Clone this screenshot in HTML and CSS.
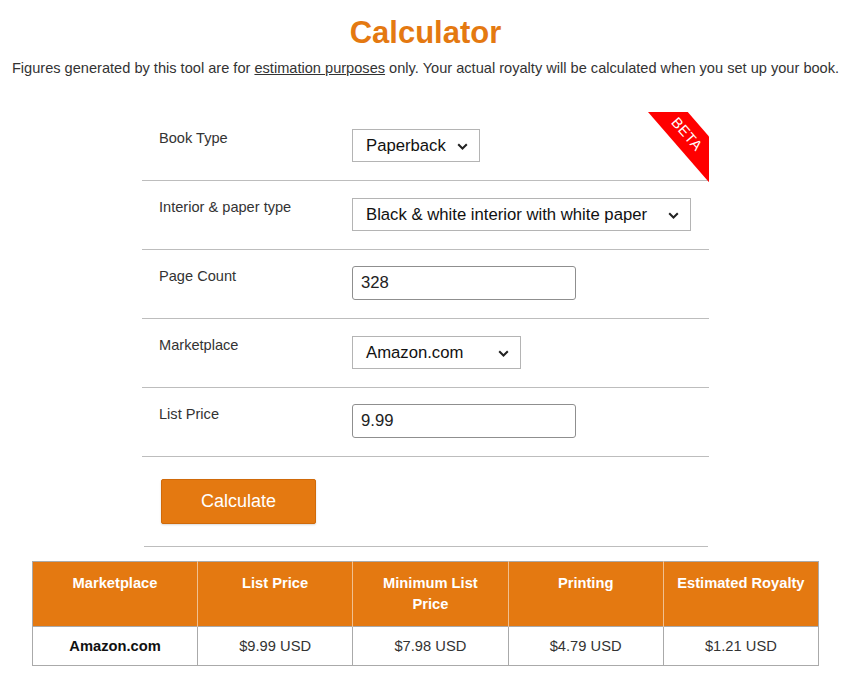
FILE: index.html
```html
<!DOCTYPE html>
<html>
<head>
<meta charset="utf-8">
<link rel="stylesheet" href="styles.css">
</head>
<body>
<div class="page">
  <h1 class="title">Calculator</h1>
  <p class="subtitle">Figures generated by this tool are for <a class="link" href="#">estimation purposes</a> only. Your actual royalty will be calculated when you set up your book.</p>

  <div class="form">
    <div class="ribbon">BETA</div>
    <div class="row">
      <div class="label">Book Type</div>
      <div class="select w-sm"><span>Paperback</span><svg class="chev" width="11" height="7" viewBox="0 0 11 7"><path d="M1.2 1.2 L5.5 5.5 L9.8 1.2" fill="none" stroke="#222" stroke-width="2"/></svg></div>
    </div>
    <div class="row">
      <div class="label">Interior &amp; paper type</div>
      <div class="select w-lg"><span>Black &amp; white interior with white paper</span><svg class="chev" width="11" height="7" viewBox="0 0 11 7"><path d="M1.2 1.2 L5.5 5.5 L9.8 1.2" fill="none" stroke="#222" stroke-width="2"/></svg></div>
    </div>
    <div class="row">
      <div class="label">Page Count</div>
      <div class="input">328</div>
    </div>
    <div class="row">
      <div class="label">Marketplace</div>
      <div class="select w-md"><span>Amazon.com</span><svg class="chev" width="11" height="7" viewBox="0 0 11 7"><path d="M1.2 1.2 L5.5 5.5 L9.8 1.2" fill="none" stroke="#222" stroke-width="2"/></svg></div>
    </div>
    <div class="row">
      <div class="label">List Price</div>
      <div class="input">9.99</div>
    </div>
    <div class="button-row">
      <button class="btn">Calculate</button>
    </div>
  </div>

  <table class="results">
    <thead>
      <tr>
        <th class="c1">Marketplace</th>
        <th>List Price</th>
        <th>Minimum List Price</th>
        <th>Printing</th>
        <th>Estimated Royalty</th>
      </tr>
    </thead>
    <tbody>
      <tr>
        <td class="strong">Amazon.com</td>
        <td>$9.99 USD</td>
        <td>$7.98 USD</td>
        <td>$4.79 USD</td>
        <td>$1.21 USD</td>
      </tr>
    </tbody>
  </table>
</div>
</body>
</html>
```

FILE: styles.css
```css
* { box-sizing: border-box; }
html, body { margin: 0; padding: 0; background: #fff; }
body {
  font-family: "Liberation Sans", Arial, sans-serif;
  color: #333;
}
.page {
  display: flex;
  flex-direction: column;
  align-items: center;
  padding-top: 15px;
  padding-right: 2px;
}
.title {
  margin: 0;
  font-size: 31px;
  line-height: 36px;
  font-weight: bold;
  color: #e47911;
}
.subtitle {
  margin: 7px 0 0;
  font-size: 14.6px;
  line-height: 20px;
  color: #333;
  white-space: nowrap;
}
.link { color: #333; text-decoration: underline; }

.form {
  position: relative;
  overflow: hidden;
  width: 567px;
  margin-top: 34px;
}
.ribbon {
  position: absolute;
  top: 7px;
  right: -38px;
  width: 120px;
  height: 30px;
  line-height: 30px;
  background: #ff0000;
  color: #fff;
  font-size: 14.5px;
  letter-spacing: 0.5px;
  text-align: center;
  transform: rotate(49deg);
}
.row {
  display: flex;
  align-items: flex-start;
  padding: 17px 0 18px 17px;
  border-bottom: 1px solid #bdbdbd;
}
.label {
  width: 193px;
  flex: none;
  font-size: 14.6px;
  line-height: 18px;
  color: #333;
}
.select {
  display: flex;
  align-items: center;
  justify-content: space-between;
  height: 33px;
  padding: 0 11px 0 13px;
  border: 1px solid #b4b4b4;
  background: #fff;
  font-size: 16.7px;
  color: #111;
}
.w-sm { width: 128px; }
.w-md { width: 169px; }
.w-lg { width: 339px; }
.chev { flex: none; margin-top: 1px; }
.input {
  width: 224px;
  height: 34px;
  margin-top: -1px;
  padding: 0 8px;
  border: 1px solid #8f8f8f;
  border-radius: 3px;
  font-size: 16.7px;
  line-height: 32px;
  color: #222;
}
.button-row {
  padding: 22px 0 22px 17px;
  margin: 0 1px 0 2px;
  border-bottom: 1px solid #bdbdbd;
}
.btn {
  display: block;
  width: 155px;
  height: 45px;
  border: 1px solid #d06a0a;
  border-radius: 2px;
  background: #e47911;
  color: #fff;
  font-family: "Liberation Sans", Arial, sans-serif;
  font-size: 18px;
  box-shadow: 0 1px 2px rgba(0,0,0,0.15);
}

.results {
  margin-top: 14px;
  width: 787px;
  border-collapse: collapse;
  table-layout: fixed;
  border: 1px solid #aaa;
  font-size: 14.7px;
}
.results th {
  background: #e47911;
  color: #fff;
  font-weight: bold;
  vertical-align: top;
  padding: 11px 12px 11px;
  line-height: 21px;
  height: 64px;
  border-left: 1px solid #f0c090;
  text-align: center;
}
.results th.c1 { width: 165px; border-left: none; }
.results td {
  height: 39px;
  padding: 0 8px;
  text-align: center;
  color: #333;
  border-left: 1px solid #aaa;
  border-top: 1px solid #aaa;
}
.results td.strong { font-weight: bold; color: #111; }
```
